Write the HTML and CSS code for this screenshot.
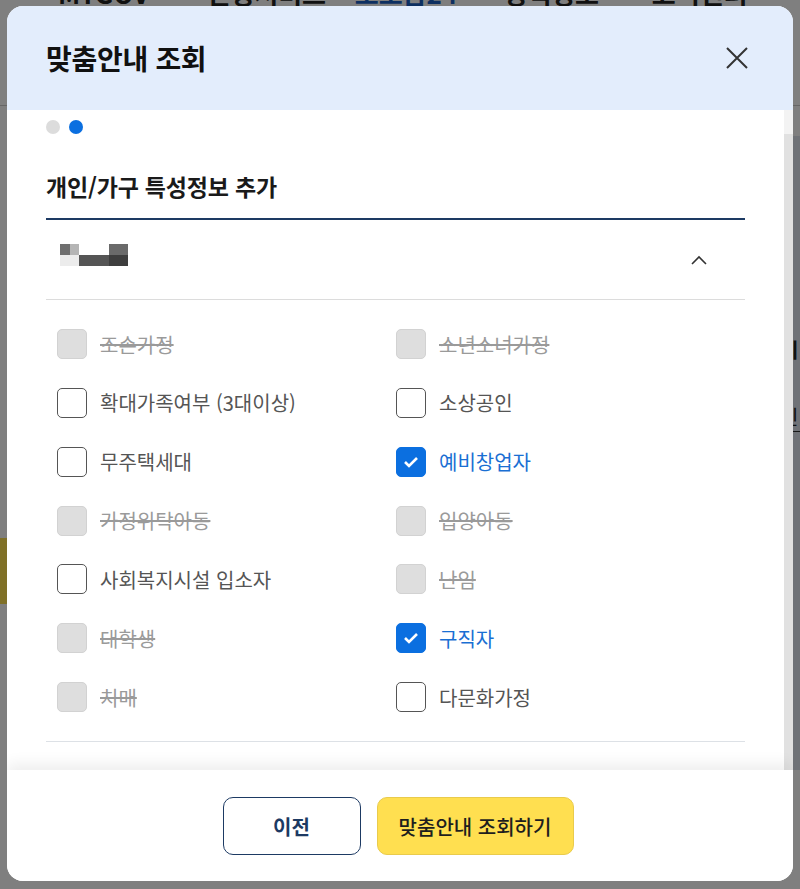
FILE: index.html
```html
<!DOCTYPE html>
<html lang="ko">

<head>
    <meta charset="UTF-8">
    <meta name="viewport" content="width=device-width, initial-scale=1.0">
    <title>맞춤안내 조회</title>
    <link rel="stylesheet" href="styles.css">
</head>

<body>
    <!-- page behind the layer -->
    <div class="page">
        <nav class="gnb">
            <span>MYGOV</span>
            <span>신청서비스</span>
            <span class="on">보조금24</span>
            <span>정책정보</span>
            <span>고객센터</span>
        </nav>
        <div class="page-body">
            <div class="banner"></div>
            <div class="side-panel">
                <p class="side-tit">-니</p>
                <p class="side-txt">신</p>
            </div>
        </div>
    </div>
    <div class="dim"></div>

    <!-- 맞춤안내 조회 layer -->
    <div class="modal">
        <div class="modal-head">
            <h2>맞춤안내 조회</h2>
            <button class="close" type="button" aria-label="닫기">
                <svg width="22" height="22" viewBox="0 0 22 22">
                    <path d="M1 1 L21 21 M21 1 L1 21" stroke="#333" stroke-width="2" fill="none" />
                </svg>
            </button>
        </div>

        <div class="modal-body">
            <div class="scroll-area">
                <div class="steps"><i></i><i class="on"></i></div>
                <h3 class="sec-title">개인/가구 특성정보 추가</h3>

                <div class="acc">
                    <div class="acc-head">
                        <svg class="masked" width="68" height="23" viewBox="0 0 68 23">
                            <rect x="0" y="0" width="10" height="11" fill="#6f6f6f" />
                            <rect x="10" y="0" width="9" height="11" fill="#b5b5b5" />
                            <rect x="0" y="11" width="19" height="11" fill="#ececec" />
                            <rect x="19" y="11" width="30" height="11" fill="#555" />
                            <rect x="49" y="0" width="19" height="11" fill="#6a6a6a" />
                            <rect x="49" y="11" width="19" height="11" fill="#3e3e3e" />
                        </svg>
                        <svg class="chev" width="16" height="10" viewBox="0 0 16 10">
                            <path d="M1 9 L8 2 L15 9" stroke="#333" stroke-width="1.6" fill="none" />
                        </svg>
                    </div>

                    <ul class="chk-list">
                        <li class="disabled"><span class="box"></span><span class="txt">조손가정</span></li>
                        <li class="disabled"><span class="box"></span><span class="txt">소년소녀가정</span></li>
                        <li><span class="box"></span><span class="txt">확대가족여부 (3대이상)</span></li>
                        <li><span class="box"></span><span class="txt">소상공인</span></li>
                        <li><span class="box"></span><span class="txt">무주택세대</span></li>
                        <li class="checked"><span class="box"><svg width="16" height="12" viewBox="0 0 16 12"><path d="M2 6 L6 10 L14 2" stroke="#fff" stroke-width="2.6" fill="none" /></svg></span><span class="txt">예비창업자</span></li>
                        <li class="disabled"><span class="box"></span><span class="txt">가정위탁아동</span></li>
                        <li class="disabled"><span class="box"></span><span class="txt">입양아동</span></li>
                        <li><span class="box"></span><span class="txt">사회복지시설 입소자</span></li>
                        <li class="disabled"><span class="box"></span><span class="txt">난임</span></li>
                        <li class="disabled"><span class="box"></span><span class="txt">대학생</span></li>
                        <li class="checked"><span class="box"><svg width="16" height="12" viewBox="0 0 16 12"><path d="M2 6 L6 10 L14 2" stroke="#fff" stroke-width="2.6" fill="none" /></svg></span><span class="txt">구직자</span></li>
                        <li class="disabled"><span class="box"></span><span class="txt">치매</span></li>
                        <li><span class="box"></span><span class="txt">다문화가정</span></li>
                    </ul>
                </div>
            </div>
            <div class="scrollbar"></div>
        </div>

        <div class="modal-foot">
            <button class="btn-prev" type="button">이전</button>
            <button class="btn-submit" type="button">맞춤안내 조회하기</button>
        </div>
    </div>
</body>

</html>
```

FILE: styles.css
```css
* {
    margin: 0;
    padding: 0;
    box-sizing: border-box;
}

body {
    font-family: "Noto Sans CJK KR", "Noto Sans", sans-serif;
    background-color: #fff;
    color: #222;
    height: 889px;
    overflow: hidden;
}

ul {
    list-style: none;
}

button {
    font-family: inherit;
    cursor: pointer;
}

/* page behind */
.page {
    margin-top: -22px;
}

.gnb {
    display: flex;
    height: 128px;
    padding-left: 58px;
    border-bottom: 1px solid #ccc;
    font-size: 26px;
    font-weight: 700;
    line-height: 30px;
}

.gnb span {
    width: 168px;
}

.gnb .on {
    color: #1a5fc2;
}

.page-body {
    display: flex;
    justify-content: space-between;
    height: 760px;
}

.banner {
    width: 12px;
    height: 66px;
    margin-top: 432px;
    background-color: #ffe04f;
}

.side-panel {
    width: 20px;
    margin-top: 30px;
    height: 634px;
    background-color: #dfe4ee;
    padding-top: 170px;
    font-size: 20px;
}

.side-tit {
    font-weight: 700;
}

.side-txt {
    margin-top: 38px;
    border-bottom: 1px solid #333;
}

.dim {
    position: fixed;
    inset: 0;
    background-color: rgba(0, 0, 0, 0.5);
}

/* layer */
.modal {
    position: fixed;
    left: 7px;
    top: 6px;
    width: 786px;
    height: 875px;
    border-radius: 16px;
    background-color: #fff;
    overflow: hidden;
    display: flex;
    flex-direction: column;
}

.modal-head {
    height: 104px;
    flex-shrink: 0;
    display: flex;
    align-items: center;
    justify-content: space-between;
    padding: 0 45px 0 39px;
    background-color: #e3edfc;
}

.modal-head h2 {
    font-size: 28px;
    font-weight: 700;
    color: #111;
    letter-spacing: -0.3px;
}

.close {
    border: none;
    background: none;
    width: 22px;
    height: 22px;
    display: flex;
}

.modal-body {
    flex: 1;
    display: flex;
    min-height: 0;
}

.scroll-area {
    flex: 1;
    padding: 10px 39px 0;
    overflow: hidden;
}

.scrollbar {
    width: 9px;
    background-color: #e1e1e1;
    border-top: 24px solid #f3f3f3;
}

.steps {
    display: flex;
    gap: 9px;
}

.steps i {
    width: 14px;
    height: 14px;
    border-radius: 50%;
    background-color: #dcdcdc;
}

.steps i.on {
    background-color: #0b6fe0;
}

.sec-title {
    margin-top: 37px;
    padding-bottom: 17px;
    border-bottom: 2px solid #1d3a63;
    font-size: 23px;
    line-height: 30px;
    font-weight: 700;
    color: #1a1a1a;
    letter-spacing: -0.2px;
}

.acc-head {
    height: 80px;
    display: flex;
    align-items: center;
    justify-content: space-between;
    padding: 0 38px 0 14px;
    border-bottom: 1px solid #dcdcdc;
}

.masked {
    margin-bottom: 8px;
}

.chk-list {
    display: grid;
    grid-template-columns: 339px 1fr;
    row-gap: 28.85px;
    padding: 29px 0 29px;
    border-bottom: 1px solid #dde1e6;
}

.chk-list li {
    display: flex;
    align-items: center;
    gap: 13px;
    padding-left: 11px;
    height: 30px;
    font-size: 20px;
    color: #555;
}

.box {
    flex-shrink: 0;
    width: 30px;
    height: 30px;
    border: 1.5px solid #555;
    border-radius: 5px;
    background-color: #fff;
    display: flex;
    align-items: center;
    justify-content: center;
}

.disabled .box {
    border-color: #d2d2d2;
    background-color: #dedede;
}

.disabled .txt {
    color: #9a9a9a;
    text-decoration: line-through;
}

.checked .box {
    border-color: #0b6fe0;
    background-color: #0b6fe0;
}

.checked .txt {
    color: #1a6fd3;
}

.modal-foot {
    position: relative;
    height: 111px;
    flex-shrink: 0;
    display: flex;
    justify-content: center;
    gap: 16px;
    padding: 27px 4px 0 0;
    background-color: #fff;
    box-shadow: 0 -6px 14px rgba(0, 0, 0, 0.07);
}

.modal-foot button {
    height: 58px;
    border-radius: 10px;
    font-size: 20px;
}

.btn-prev {
    width: 138px;
    border: 1px solid #1d3a63;
    background-color: #fff;
    color: #1d3a63;
    font-weight: 700;
}

.btn-submit {
    width: 197px;
    border: 1px solid #e9cb4c;
    background-color: #ffdf50;
    color: #1e1e1e;
    font-weight: 500;
}
```
